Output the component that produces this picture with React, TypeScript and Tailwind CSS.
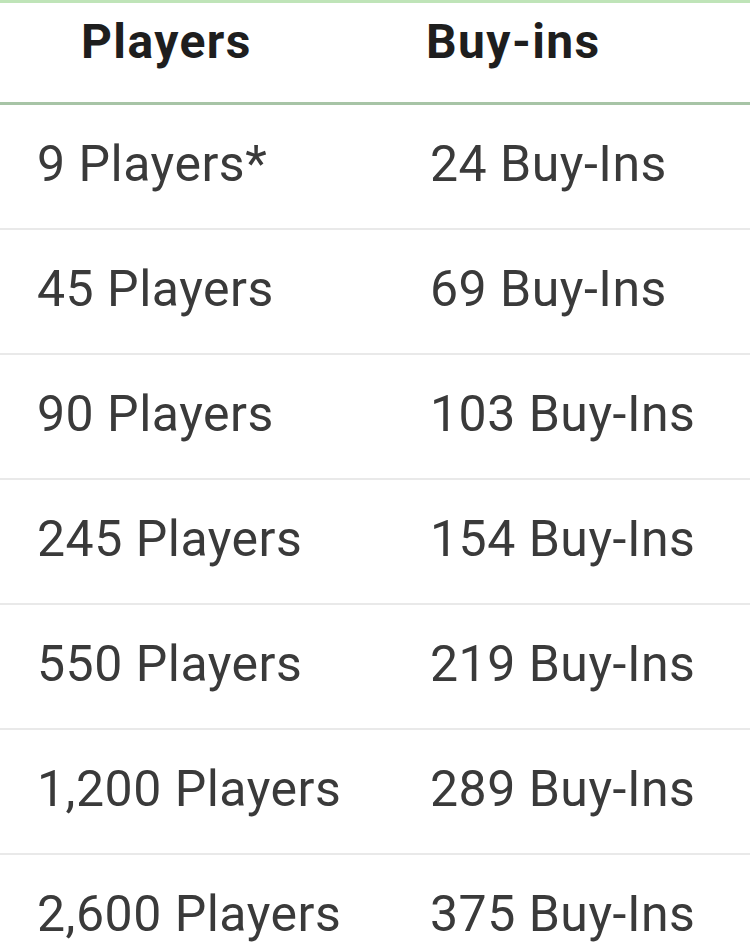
const rows = [
  ['9 Players*', '24 Buy-Ins'],
  ['45 Players', '69 Buy-Ins'],
  ['90 Players', '103 Buy-Ins'],
  ['245 Players', '154 Buy-Ins'],
  ['550 Players', '219 Buy-Ins'],
  ['1,200 Players', '289 Buy-Ins'],
  ['2,600 Players', '375 Buy-Ins'],
];

export default function App() {
  return (
    <div className="w-[750px] h-[952px] overflow-hidden bg-white font-['Roboto',sans-serif]">
      {/* Header */}
      <div className="grid grid-cols-[392px_1fr] h-[105px] border-t-[3px] border-t-[#bfe4b8] border-b-[3px] border-b-[#a7c4a6] text-[#1e1e1e]">
        <div className="pl-[81px] pt-[15px] text-[48px] leading-none font-bold tracking-[1.4px]">Players</div>
        <div className="pl-[34px] pt-[15px] text-[48px] leading-none font-bold tracking-[1.4px]">Buy-ins</div>
      </div>

      {/* Rows */}
      {rows.map(([players, buyins]) => (
        <div
          key={players}
          className="grid grid-cols-[392px_1fr] h-[125px] border-b-2 border-[#e9e9e9] text-[50px] tracking-[0.5px] text-[#3a3a3a]"
        >
          <div className="pl-[37px] flex items-center pb-[4px]">{players}</div>
          <div className="pl-[38px] flex items-center pb-[4px]">{buyins}</div>
        </div>
      ))}
    </div>
  );
}
